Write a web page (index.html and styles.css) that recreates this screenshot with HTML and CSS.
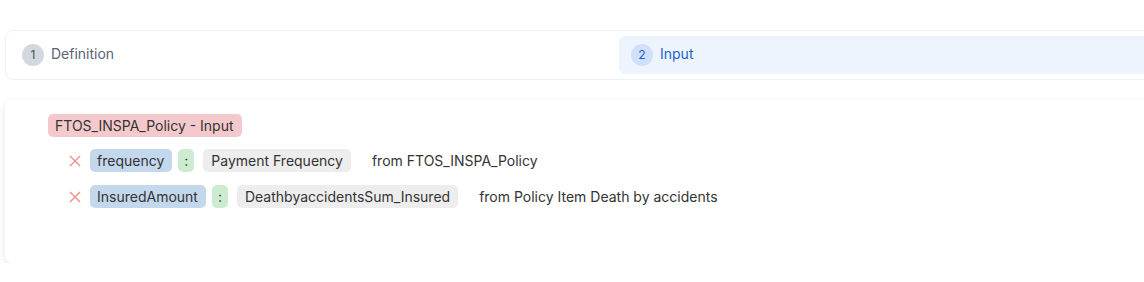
FILE: index.html
```html
<!DOCTYPE html>
<html lang="en">

<head>
    <meta charset="UTF-8">
    <meta name="viewport" content="width=device-width, initial-scale=1.0">
    <title>Mapping Input</title>
    <link rel="stylesheet" href="styles.css">
</head>

<body>
    <div class="page">

        <!-- wizard steps -->
        <div class="steps">
            <div class="step">
                <span class="step-num">1</span>
                <span class="step-label">Definition</span>
            </div>
            <div class="step step-active">
                <span class="step-num">2</span>
                <span class="step-label">Input</span>
            </div>
        </div>

        <!-- input mapping card -->
        <div class="card">
            <div class="source">
                <span class="chip chip-source">FTOS_INSPA_Policy - Input</span>
            </div>

            <div class="rows">
                <div class="row">
                    <span class="remove">
                        <svg width="12" height="12" viewBox="0 0 12 12"><path d="M1 1 L11 11 M11 1 L1 11" /></svg>
                    </span>
                    <span class="chip chip-field">frequency</span>
                    <span class="chip chip-sep">:</span>
                    <span class="chip chip-value">Payment Frequency</span>
                    <span class="origin">from FTOS_INSPA_Policy</span>
                </div>
                <div class="row">
                    <span class="remove">
                        <svg width="12" height="12" viewBox="0 0 12 12"><path d="M1 1 L11 11 M11 1 L1 11" /></svg>
                    </span>
                    <span class="chip chip-field">InsuredAmount</span>
                    <span class="chip chip-sep">:</span>
                    <span class="chip chip-value">DeathbyaccidentsSum_Insured</span>
                    <span class="origin">from Policy Item Death by accidents</span>
                </div>
            </div>
        </div>
    </div>
</body>

</html>
```

FILE: styles.css
```css
html,
body {
    margin: 0;
    overflow: hidden;
}

body {
    background: #fff;
    font-family: Inter, 'Noto Sans', sans-serif;
    font-size: 14px;
    color: #333;
}

.page {
    padding: 30px 0 0 5px;
    width: 1240px;
}

.steps {
    display: flex;
    padding: 5px 5px 5px 4px;
    width: 1218px;
    border: 1px solid #eef0f2;
    border-radius: 8px;
}

.step {
    flex: 1;
    display: flex;
    align-items: center;
    gap: 7px;
    height: 38px;
    padding: 0 12px;
    border-radius: 6px;
    color: #5b6274;
    line-height: 1;
}

.step-num {
    display: flex;
    align-items: center;
    justify-content: center;
    width: 22px;
    height: 22px;
    border-radius: 50%;
    background: #d3d7de;
    font-size: 12px;
    color: #4a5060;
}

.step-label {
    padding-bottom: 2px;
}

.step-active {
    background: #edf4fe;
    color: #1d5fd0;
}

.step-active .step-num {
    background: #cfe0fb;
    color: #1d5fd0;
}

.card {
    margin-top: 20px;
    width: 1228px;
    height: 163px;
    box-sizing: border-box;
    padding: 14px 43px;
    border-radius: 8px;
    box-shadow: 0 3px 9px rgba(0, 0, 0, 0.1);
}

.chip {
    display: inline-flex;
    align-items: center;
    height: 23px;
    padding: 0 8px 0 7px;
    border-radius: 5px;
    color: #333;
}

.chip-source {
    background: #f3c9cb;
}

.rows {
    display: flex;
    flex-direction: column;
    gap: 13px;
    margin-top: 12px;
    padding-left: 21px;
}

.row {
    display: flex;
    align-items: center;
    gap: 6px;
}

.remove {
    display: flex;
    width: 12px;
    margin-right: 3px;

    & path {
        stroke: #ea8f8f;
        stroke-width: 1.4;
    }
}

.chip-field {
    background: #c3d8ec;
}

.chip-sep {
    background: #cdebd1;
    padding: 0 6px;
    margin-right: 3px;
}

.chip-value {
    background: #ededed;
    padding: 0 8px;
}

.origin {
    margin-left: 15px;
    color: #333;
}
```
